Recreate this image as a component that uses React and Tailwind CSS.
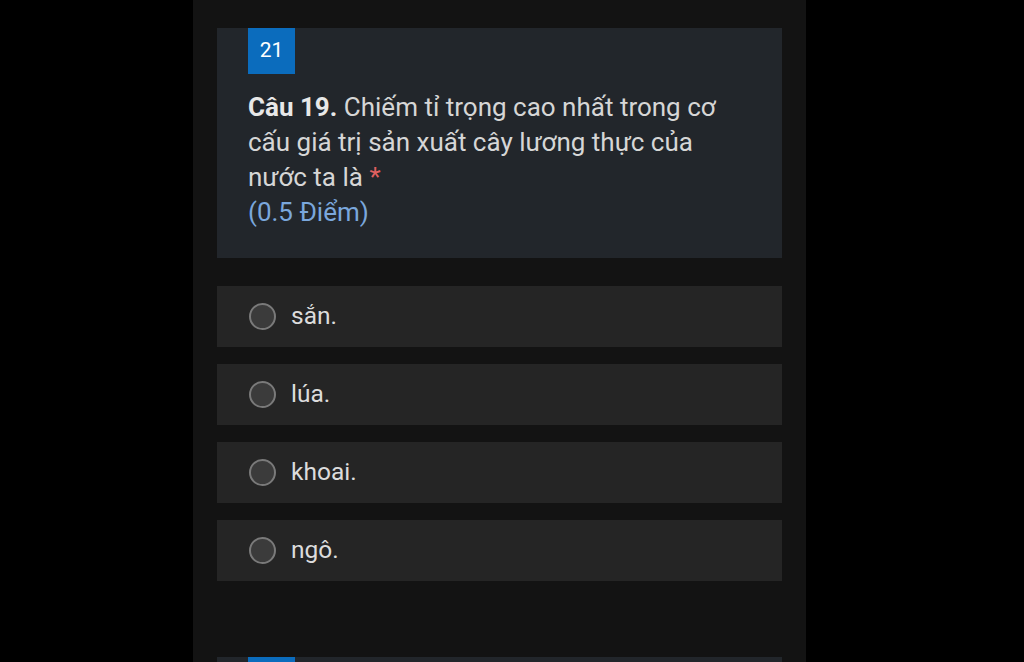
import React from "react";

const options = ["sắn.", "lúa.", "khoai.", "ngô."];

export default function App() {
  return (
    <div className="w-[1024px] h-[662px] bg-black overflow-hidden flex justify-center" style={{ fontFamily: "Roboto, 'Noto Sans', sans-serif" }}>
      <div className="w-[613px] ml-[-25px] h-full bg-[#131313] pt-[28px] px-[24px] flex flex-col">
        <div className="bg-[#22262b] h-[230px] pl-[31px] pr-[40px] flex flex-col shrink-0">
          <div className="w-[47px] h-[46px] bg-[#0b6cbd] text-white text-[21px] flex items-center justify-center">21</div>
          <div className="mt-[16px] text-[26px] leading-[35px] text-[#d6d6d6]">
            <span className="font-bold text-[#e8e8e8]">Câu 19.</span> Chiếm tỉ trọng cao nhất trong cơ cấu giá trị sản xuất cây lương thực của nước ta là <span className="text-[#e06060]">*</span>
            <div className="text-[#7aa7dc]">(0.5 Điểm)</div>
          </div>
        </div>
        <div className="mt-[28px] flex flex-col gap-[17px] shrink-0">
          {options.map((o) => (
            <div key={o} className="h-[61px] bg-[#252525] flex items-center pl-[32px]">
              <div className="w-[27px] h-[27px] rounded-full border-2 border-[#7a7a7a] bg-[#3b3b3b]"></div>
              <span className="ml-[15px] text-[24.5px] text-[#dcdcdc]">{o}</span>
            </div>
          ))}
        </div>
        <div className="mt-[76px] bg-[#22262b] h-[40px] pl-[31px] shrink-0">
          <div className="w-[47px] h-[46px] bg-[#0b6cbd]"></div>
        </div>
      </div>
    </div>
  );
}
